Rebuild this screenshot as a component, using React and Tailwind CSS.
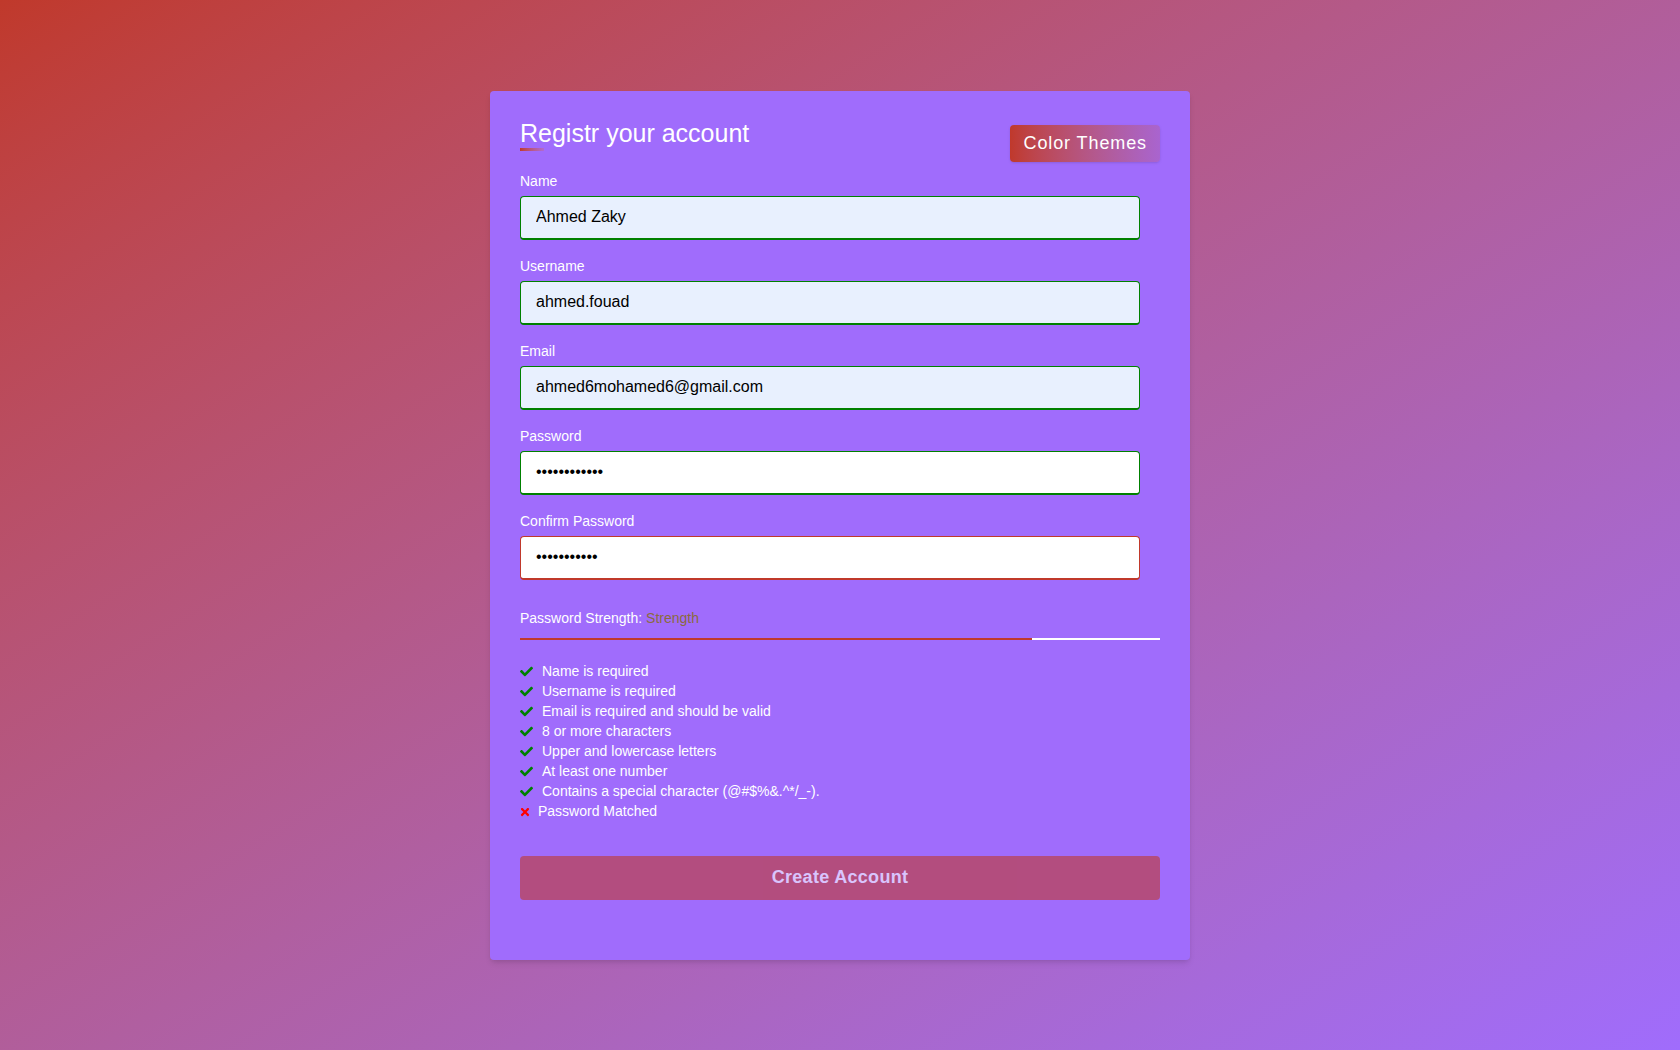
import React from "react";
import { FaCheck, FaTimes } from "react-icons/fa";

const fields = [
  { label: "Name", type: "text", value: "Ahmed Zaky", filled: true, ok: true },
  { label: "Username", type: "text", value: "ahmed.fouad", filled: true, ok: true },
  { label: "Email", type: "email", value: "ahmed6mohamed6@gmail.com", filled: true, ok: true },
  { label: "Password", type: "password", value: "Ahmed@123456", filled: false, ok: true },
  { label: "Confirm Password", type: "password", value: "Ahmed@12345", filled: false, ok: false },
];

const rules = [
  { text: "Name is required", ok: true },
  { text: "Username is required", ok: true },
  { text: "Email is required and should be valid", ok: true },
  { text: "8 or more characters", ok: true },
  { text: "Upper and lowercase letters", ok: true },
  { text: "At least one number", ok: true },
  { text: "Contains a special character (@#$%&.^*/_-).", ok: true },
  { text: "Password Matched", ok: false },
];

export default function App() {
  return (
    <div
      className="min-h-screen w-full flex items-center justify-center bg-linear-to-br from-[#c0392b] to-[#a06cfc]"
      style={{ fontFamily: '"Liberation Sans", Arial, sans-serif' }}
    >
      <div className="w-[700px] bg-[#a06cfc] rounded-[4px] shadow-md px-[30px] pt-[28px] pb-[60px]">
        {/* Header */}
        <div className="flex items-start justify-between">
          <div>
            <h1 className="text-[25px] leading-[29px] text-white">Registr your account</h1>
            <div className="w-[24px] h-[3px] bg-linear-to-r from-[#c0392b] to-[#b06ad0]"></div>
          </div>
          <button className="mt-[6px] h-[37px] px-[13px] rounded-[4px] bg-linear-to-r from-[#c0392b] to-[#a964cf] text-white text-[18px] tracking-[0.9px] shadow-sm">
            Color Themes
          </button>
        </div>

        {/* Fields */}
        <div className="mt-[11px]">
          {fields.map((f) => (
            <div key={f.label} className="mb-[18px]">
              <label className="block text-[14px] leading-[16px] text-white mb-[7px]">{f.label}</label>
              <input
                type={f.type}
                value={f.value}
                readOnly
                className={`w-[620px] h-[44px] px-[15px] text-[16px] text-black rounded-[4px] border border-b-2 outline-none ${
                  f.filled ? "bg-[#e8f0fe]" : "bg-white"
                } ${f.ok ? "border-[#008000]" : "border-[#c0392b]"}`}
              />
            </div>
          ))}
        </div>

        {/* Strength */}
        <div className="mt-[30px] text-[14px] leading-[16px] text-white">
          Password Strength: <span className="text-[#8b6a3e]">Strength</span>
        </div>
        <div className="mt-[12px] h-[2px] w-full bg-white flex">
          <div className="h-full w-[80%] bg-[#c0392b]"></div>
        </div>

        {/* Rules */}
        <ul className="mt-[22px]">
          {rules.map((r) => (
            <li key={r.text} className="flex items-center h-[20px] text-[14px] text-white">
              {r.ok ? (
                <FaCheck className="w-[13px] h-[13px] text-[#008000] mr-[9px] shrink-0" />
              ) : (
                <FaTimes className="w-[10px] h-[12px] text-[#ff0000] mr-[8px] shrink-0" />
              )}
              {r.text}
            </li>
          ))}
        </ul>

        <button
          disabled
          className="mt-[34px] w-full h-[44px] rounded-[4px] bg-[#c0392b] opacity-60 text-white text-[18px] font-bold tracking-[0.3px]"
        >
          Create Account
        </button>
      </div>
    </div>
  );
}
